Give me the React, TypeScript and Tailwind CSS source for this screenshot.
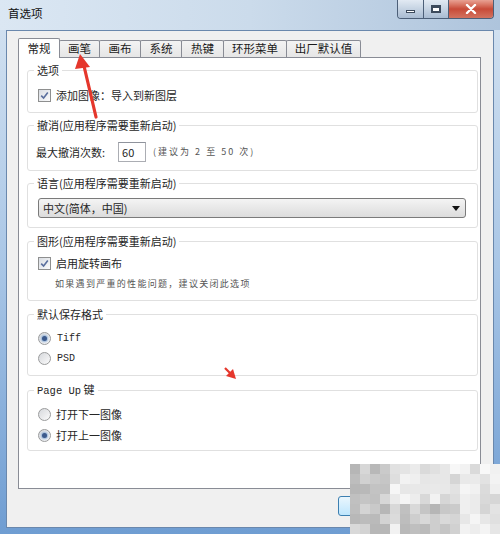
import React from "react";

const cjk = "font-['Noto_Sans_CJK_SC','Noto_Sans',sans-serif]";
const mono = "font-['Liberation_Mono','Noto_Sans_CJK_SC',monospace]";

const tabs = [
  { label: "常规", w: "w-[42px]" },
  { label: "画笔", w: "w-[41px]" },
  { label: "画布", w: "w-[42px]" },
  { label: "系统", w: "w-[42px]" },
  { label: "热键", w: "w-[43px]" },
  { label: "环形菜单", w: "w-[64px]" },
  { label: "出厂默认值", w: "w-[75px]" },
];

function Checkbox() {
  return (
    <span className="flex h-[13px] w-[13px] shrink-0 items-center justify-center border border-[#8e8f8f] bg-gradient-to-br from-[#d9dde3] to-[#fbfbfb]">
      <svg width="9" height="9" viewBox="0 0 9 9">
        <path d="M1.2 4.6 L3.6 7 L7.8 1.6" fill="none" stroke="#5a6f9e" strokeWidth="1.6" />
      </svg>
    </span>
  );
}

function Radio({ on }: { on?: boolean }) {
  return (
    <span className="flex h-[13px] w-[13px] shrink-0 items-center justify-center rounded-full border border-[#9a9b9c] bg-gradient-to-br from-[#d6d8dc] to-[#fbfbfb]">
      {on && <span className="h-[5px] w-[5px] rounded-full bg-[#3c5a8c] shadow-[0_0_2px_1px_#8fb0d6]" />}
    </span>
  );
}

function Group({
  title,
  className,
  children,
}: {
  title: React.ReactNode;
  className: string;
  children: React.ReactNode;
}) {
  return (
    <fieldset className={`rounded-[3px] border border-[#e0e0e0] ${className}`}>
      <legend className="ml-[6px] px-[3px] text-[11px] leading-[14px] text-[#262626]">{title}</legend>
      {children}
    </fieldset>
  );
}

function Watermark() {
  const cells = [];
  for (let r = 0; r < 7; r++) {
    for (let c = 0; c < 15; c++) {
      const n = Math.sin(r * 78.233 + c * 12.9898) * 43758.5453;
      const f = n - Math.floor(n);
      const dark = c < 4 || (r > 3 && c > 4 && c < 11) ? 30 : 0;
      const v = Math.round(212 + 36 * f - dark);
      cells.push(
        <rect key={`${r}-${c}`} x={c * 10} y={r * 10} width="10" height="10" fill={`rgb(${v},${v},${v})`} />
      );
    }
  }
  return (
    <svg className="absolute left-[350px] top-[464px]" width="150" height="70" viewBox="0 0 150 70">
      {cells}
    </svg>
  );
}

export default function App() {
  return (
    <div className={`relative flex h-[534px] w-[500px] flex-col overflow-hidden bg-gradient-to-b from-[#d5e3f1] via-[#a9c6e6] to-[#6f9dd2] px-[6px] pb-[6px] ${cjk}`}>
      {/* title bar */}
      <div className="-mx-[6px] flex h-[30px] items-start justify-between bg-gradient-to-r from-[#dbe7f3] via-[#cbdbeb] to-[#aec4dc] pl-[8px] pr-[6px]">
        <span className="mt-[5px] text-[11.5px] leading-[16px] text-[#111]">首选项</span>
        <div className="flex h-[19px] overflow-hidden rounded-b-[4px] border border-t-0 border-[#4c5f78]">
          <div className="flex w-[25px] items-center justify-center bg-gradient-to-b from-[#e2eaf3] to-[#a9bcd2]">
            <span className="mt-[5px] h-[3px] w-[9px] border border-[#3c4a5c] bg-white" />
          </div>
          <div className="flex w-[25px] items-center justify-center border-l border-[#4c5f78] bg-gradient-to-b from-[#e2eaf3] to-[#a9bcd2]">
            <span className="h-[8px] w-[10px] border-[2px] border-t-[3px] border-[#3c4a5c] bg-white" />
          </div>
          <div className="flex w-[45px] items-center justify-center border-l border-[#4c5f78] bg-gradient-to-b from-[#e8a193] via-[#c84a38] to-[#d2725f]">
            <svg width="12" height="10" viewBox="0 0 12 10">
              <path d="M2 1 L10 9 M10 1 L2 9" stroke="#fff" strokeWidth="2.4" strokeLinecap="round" />
            </svg>
          </div>
        </div>
      </div>

      {/* client */}
      <div className="flex flex-1 flex-col border border-[#6a88ad] bg-[#f0f0f0] pl-[11px] pr-[12px] pt-[7px]">
        <div className="flex h-[19px] items-end">
          {tabs.map((t, i) =>
            i === 0 ? (
              <div
                key={t.label}
                className={`relative z-10 -mb-px flex h-[20px] ${t.w} items-center justify-center rounded-t-[2px] border border-b-0 border-[#898c95] bg-white text-[11.5px] text-[#1a1a1a]`}
              >
                {t.label}
              </div>
            ) : (
              <div
                key={t.label}
                className={`-ml-px flex h-[17px] ${t.w} items-center justify-center rounded-t-[2px] border border-b-0 border-[#898c95] bg-gradient-to-b from-[#f3f3f3] to-[#e6e6e6] text-[11.5px] text-[#1a1a1a]`}
              >
                {t.label}
              </div>
            )
          )}
        </div>

        <div className="flex h-[432px] flex-col border border-[#898c95] bg-white pl-[8px] pr-[2px] pt-[5px] text-[11px] text-[#262626]">
          <Group title="选项" className="h-[50px]">
            <div className="mt-[10px] flex h-[16px] items-center gap-[5px] pl-[10px]">
              <Checkbox />
              <span>添加图像：导入到新图层</span>
            </div>
          </Group>

          <Group title="撤消(应用程序需要重新启动)" className="mt-[5px] h-[53px]">
            <div className="mt-[10px] flex h-[20px] items-center pl-[8px]">
              <span>最大撤消次数:</span>
              <span className="ml-[13px] flex h-[20px] w-[28px] items-center border border-[#abadb3] border-t-[#8f939c] pl-[3px] text-[11px]">60</span>
              <span className="ml-[7px] text-[9px] tracking-[2px] text-[#555]">(建议为 2 至 50 次)</span>
            </div>
          </Group>

          <Group title="语言(应用程序需要重新启动)" className="mt-[5px] h-[52px]">
            <div className="ml-[10px] mt-[8px] flex h-[20px] w-[428px] items-center justify-between rounded-[3px] border border-[#7a7a7a] bg-gradient-to-b from-[#f4f4f4] to-[#dcdcdc] pl-[4px] pr-[5px]">
              <span>中文(简体，中国)</span>
              <svg width="8" height="5" viewBox="0 0 8 5">
                <path d="M0 0 H8 L4 5 Z" fill="#111" />
              </svg>
            </div>
          </Group>

          <Group title="图形(应用程序需要重新启动)" className="mt-[6px] h-[67px]">
            <div className="mt-[7px] flex h-[16px] items-center gap-[5px] pl-[10px]">
              <Checkbox />
              <span>启用旋转画布</span>
            </div>
            <div className="ml-[27px] mt-[6px] h-[14px] text-[9px] leading-[14px] tracking-[1.3px] text-[#555]">
              如果遇到严重的性能问题，建议关闭此选项
            </div>
          </Group>

          <Group title="默认保存格式" className="mt-[6px] h-[69px]">
            <div className="mt-[9px] flex flex-col gap-[4px] pl-[10px]">
              <div className="flex h-[16px] items-center gap-[6px]">
                <Radio on />
                <span className={`${mono} text-[10px]`}>Tiff</span>
              </div>
              <div className="flex h-[16px] items-center gap-[6px]">
                <Radio />
                <span className={`${mono} text-[10px]`}>PSD</span>
              </div>
            </div>
          </Group>

          <Group
            title={
              <>
                <span className={`${mono} text-[10.5px]`}>Page Up</span> 键
              </>
            }
            className="mt-[6px] h-[69px]"
          >
            <div className="mt-[8px] flex flex-col gap-[5px] pl-[10px]">
              <div className="flex h-[16px] items-center gap-[5px]">
                <Radio />
                <span>打开下一图像</span>
              </div>
              <div className="flex h-[16px] items-center gap-[5px]">
                <Radio on />
                <span>打开上一图像</span>
              </div>
            </div>
          </Group>
        </div>

        <div className="mt-[7px] flex justify-end gap-[7px]">
          <button className="flex h-[20px] w-[68px] items-center justify-center rounded-[3px] border border-[#3c7fb1] bg-gradient-to-b from-[#eaf6fd] to-[#bee6fd] text-[11px] text-[#111]">
            确定
          </button>
          <button className="flex h-[20px] w-[68px] items-center justify-center rounded-[3px] border border-[#707070] bg-gradient-to-b from-[#f2f2f2] to-[#dddddd] text-[11px] text-[#111]">
            取消
          </button>
        </div>
      </div>

      <Watermark />

      <svg className="pointer-events-none absolute left-0 top-0" width="500" height="534" viewBox="0 0 500 534">
        <path d="M84 66 L96 117" stroke="#e5372c" strokeWidth="3.2" strokeLinecap="round" />
        <polygon points="80,54 75,69 90,67" fill="#e5372c" />
        <path d="M225 368 L231 374" stroke="#e5372c" strokeWidth="2.2" />
        <polygon points="236,379 226,376 233,369" fill="#e5372c" />
      </svg>
    </div>
  );
}
